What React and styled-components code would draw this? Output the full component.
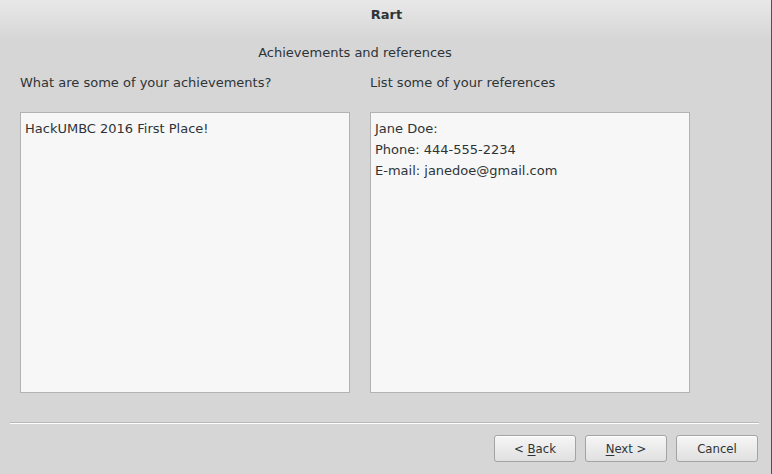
import styled, { createGlobalStyle } from "styled-components";

const Global = createGlobalStyle`
  html, body {
    margin: 0;
    padding: 0;
    background: #d6d6d6;
  }
  body {
    font-family: "DejaVu Sans", "Liberation Sans", sans-serif;
    color: #2e3436;
  }
`;

export default function App() {
  return (
    <Window>
      <Global />
      <TitleBar>Rart</TitleBar>
      <Body>
        <Heading>Achievements and references</Heading>
        <Columns>
          <Field>
            <Label>What are some of your achievements?</Label>
            <TextBox>
              <Line>HackUMBC 2016 First Place!</Line>
            </TextBox>
          </Field>
          <Field>
            <Label>List some of your references</Label>
            <TextBox>
              <Line>Jane Doe:</Line>
              <Line>Phone: 444-555-2234</Line>
              <Line>E-mail: janedoe@gmail.com</Line>
            </TextBox>
          </Field>
        </Columns>
      </Body>
      <Separator />
      <ButtonRow>
        <Button>
          <span>&lt; <u>B</u>ack</span>
        </Button>
        <Button>
          <span><u>N</u>ext &gt;</span>
        </Button>
        <Button>
          <span>Cancel</span>
        </Button>
      </ButtonRow>
    </Window>
  );
}

const Window = styled.div`
  width: 772px;
  height: 474px;
  box-sizing: border-box;
  border-right: 1px solid #505050;
  background: #d6d6d6;
  display: flex;
  flex-direction: column;
  overflow: hidden;

  & > * {
    flex-shrink: 0;
  }
`;

const TitleBar = styled.div`
  height: 40px;
  box-sizing: border-box;
  padding: 7px 0 0 2px;
  background: linear-gradient(#e8e8e8, #d6d6d6);
  text-align: center;
  line-height: 16px;
  font-weight: bold;
  font-size: 13px;
  color: #2e3436;
`;

const Body = styled.div`
  width: 670px;
  padding: 0 20px;
  display: flex;
  flex-direction: column;
`;

const Heading = styled.div`
  font-size: 13px;
  text-align: center;
  height: 20px;
  line-height: 20px;
  margin-top: 3px;
`;

const Columns = styled.div`
  display: grid;
  grid-template-columns: 330px 320px;
  column-gap: 20px;
  margin-top: 10px;
`;

const Field = styled.div`
  display: flex;
  flex-direction: column;
`;

const Label = styled.div`
  font-size: 13px;
  height: 20px;
  line-height: 20px;
  margin-bottom: 19px;
`;

const TextBox = styled.div`
  height: 281px;
  box-sizing: border-box;
  border: 1px solid #b2b2b2;
  background: #f7f7f7;
  padding: 5px 4px;
`;

const Line = styled.div`
  font-size: 13px;
  line-height: 21px;
`;

const Separator = styled.div`
  margin: 29px 12px 0 10px;
  height: 1px;
  background: #b8b8b8;
  border-bottom: 1px solid #ffffff;
`;

const ButtonRow = styled.div`
  display: flex;
  justify-content: flex-end;
  gap: 9px;
  padding: 11px 13px 0 0;
`;

const Button = styled.div`
  width: 82px;
  height: 27px;
  box-sizing: border-box;
  border: 1px solid #a3a3a3;
  border-radius: 3px;
  background: linear-gradient(#f6f6f6, #e0e0e0);
  box-shadow: inset 0 1px 0 #ffffff;
  display: flex;
  align-items: center;
  justify-content: center;
  font-family: "DejaVu Sans Condensed", "DejaVu Sans", sans-serif;
  font-size: 13px;
  color: #2e3436;

  u {
    text-underline-offset: 2px;
  }
`;
